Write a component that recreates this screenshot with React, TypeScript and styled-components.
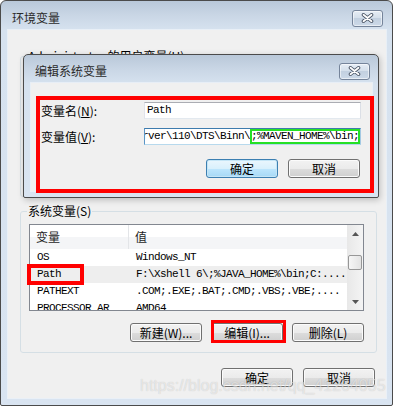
import React from 'react';
import styled, { createGlobalStyle, css } from 'styled-components';

const CJK = `"Noto Sans CJK SC", "Liberation Sans", sans-serif`;
const MONO = `"Liberation Mono", "DejaVu Sans Mono", monospace`;

const GlobalStyle = createGlobalStyle`
    html, body {
        margin: 0;
        padding: 0;
        background: #ffffff;
    }
    body {
        font-family: ${CJK};
        font-size: 12px;
        color: #000;
    }
`;

const frame = css`
    box-sizing: border-box;
    border: 1px solid #4b4b4b;
    background: linear-gradient(180deg, #b9c8d9 0, #c9d6e5 14px, #d6e2ef 29px, #d9e4f1 100%);
    display: flex;
    flex-direction: column;
`;

const SWindow = styled.div`
    ${frame};
    position: relative;
    width: 393px;
    height: 406px;
    border-radius: 6px 6px 2px 2px;
    padding: 0 6px 7px 7px;
    overflow: hidden;
`;

const STitleBar = styled.div<{ $height: number; $top: number; $right: number }>`
    height: ${({ $height }) => $height}px;
    box-sizing: border-box;
    padding: ${({ $top, $right }) => `${$top}px ${$right}px 0 4px`};
    display: flex;
    align-items: center;
    justify-content: space-between;
`;

const STitle = styled.span`
    font: 12px/14px ${CJK};
    color: #2a2a2a;
`;

const SCloseButton = styled.div`
    width: 31px;
    height: 17px;
    box-sizing: border-box;
    border: 1px solid #75849a;
    border-radius: 3px;
    background: linear-gradient(180deg, #e6edf5 0%, #d3deea 50%, #c2d0e0 50%, #ccd9e8 100%);
    box-shadow: inset 0 0 0 1px rgba(255, 255, 255, 0.55);
    display: grid;
    place-items: center;
`;

const SBody = styled.div`
    flex: 1;
    background: #f0f0f0;
    padding: 19px 9px 11px 12px;
    display: flex;
    flex-direction: column;
    box-shadow: 0 0 0 1px rgba(255, 255, 255, 0.45);
`;

const SGroup = styled.fieldset<{ $height?: number }>`
    margin: 0;
    min-width: 0;
    border: 1px solid #d5dfe5;
    border-radius: 3px;
    padding: 6px 12px 10px 8px;
    ${({ $height }) =>
        $height &&
        css`
            height: ${$height}px;
            box-sizing: border-box;
        `}
    & + & {
        margin-top: 7px;
    }
`;

const SLegend = styled.legend`
    padding: 0 1px;
    margin-left: -2px;
    font: 12px/14px ${CJK};
    color: #000;
`;

const SListWrap = styled.div`
    position: relative;
    height: 87px;
`;

const SList = styled.div`
    height: 100%;
    box-sizing: border-box;
    border: 1px solid #828790;
    background: #fff;
    display: flex;
    overflow: hidden;
`;

const STable = styled.div`
    flex: 1;
    min-width: 0;
    display: flex;
    flex-direction: column;
`;

const SHeaderRow = styled.div`
    display: grid;
    grid-template-columns: 99px 1fr;
    height: 24px;
    flex-shrink: 0;
    background: linear-gradient(180deg, #ffffff 0 48%, #f4f5f7 48% 100%);
`;

const SHeaderCell = styled.div`
    display: flex;
    align-items: center;
    padding-left: 6px;
    font: 12px/14px ${CJK};
    color: #1f1f1f;
    &:first-child {
        border-right: 1px solid #e3e5e8;
    }
`;

const SRow = styled.div<{ $selected?: boolean }>`
    display: grid;
    grid-template-columns: 99px 1fr;
    height: 17px;
    flex-shrink: 0;
    align-items: center;
    background: ${({ $selected }) => ($selected ? '#eeeeee' : '#ffffff')};
    font: 11px/17px ${MONO};
    letter-spacing: -0.6px;
    color: #000;
    white-space: nowrap;
`;

const SCell = styled.div`
    padding-left: 7px;
    overflow: hidden;
`;

const SScrollbar = styled.div`
    width: 16px;
    flex-shrink: 0;
    display: flex;
    flex-direction: column;
    background: linear-gradient(90deg, #e8e8e8, #f4f4f4);
`;

const SArrowBox = styled.div`
    height: 17px;
    display: grid;
    place-items: center;
`;

const STrack = styled.div`
    flex: 1;
`;

const SThumb = styled.div`
    margin: 13px 1px 0;
    height: 15px;
    box-sizing: border-box;
    border: 1px solid #979797;
    border-radius: 2px;
    background: linear-gradient(90deg, #f6f6f6, #e3e3e3);
`;

const SButtonRow = styled.div<{ $gap: number; $top: number; $right?: number }>`
    display: flex;
    justify-content: flex-end;
    gap: ${({ $gap }) => $gap}px;
    margin-top: ${({ $top }) => $top}px;
    padding-right: ${({ $right = 0 }) => $right}px;
`;

const SButton = styled.button<{ $default?: boolean }>`
    width: 72px;
    height: 19px;
    box-sizing: border-box;
    padding: 0;
    border: 1px solid #707070;
    border-radius: 3px;
    background: linear-gradient(180deg, #f2f2f2 0%, #ebebeb 50%, #dddddd 50%, #cfcfcf 100%);
    box-shadow: inset 0 0 0 1px #fbfbfb;
    font: 12px/1 ${CJK};
    color: #000;
    display: flex;
    align-items: center;
    justify-content: center;
    ${({ $default }) =>
        $default &&
        css`
            border-color: #3c7fb1;
            background: linear-gradient(180deg, #eaf6fd 0%, #d9f0fc 50%, #bee6fd 50%, #a7d9f5 100%);
            box-shadow: inset 0 0 0 1px #c4e5f6;
        `}
`;

const SMarkedSlot = styled.span`
    position: relative;
    display: inline-flex;
`;

// red annotation frames drawn over the screenshot
const SMark = styled.div<{ $left: number; $top: number; $width: number; $height: number; $thick: number }>`
    position: absolute;
    left: ${({ $left }) => $left}px;
    top: ${({ $top }) => $top}px;
    width: ${({ $width }) => $width}px;
    height: ${({ $height }) => $height}px;
    box-sizing: border-box;
    border: ${({ $thick }) => $thick}px solid #ff0000;
    pointer-events: none;
    z-index: 2;
`;

const SDialog = styled.div`
    ${frame};
    position: absolute;
    left: 22px;
    top: 53px;
    width: 356px;
    height: 144px;
    border-radius: 5px 5px 2px 2px;
    padding: 0 6px 6px 7px;
    box-shadow: 1px 2px 6px rgba(0, 0, 0, 0.22);
    z-index: 1;
`;

const SDialogBody = styled.div`
    flex: 1;
    position: relative;
    background: #f0f0f0;
    padding: 19px 11px 0 10px;
    box-shadow: 0 0 0 1px rgba(255, 255, 255, 0.45);
`;

const SForm = styled.div`
    display: grid;
    grid-template-columns: 103px 1fr;
    grid-auto-rows: 17px;
    row-gap: 9px;
    align-items: center;
`;

const SLabel = styled.span`
    font: 12px/14px ${CJK};
    color: #000;
`;

const SField = styled.div<{ $focused?: boolean }>`
    height: 17px;
    box-sizing: border-box;
    border: 1px solid;
    border-color: #abadb3 #dbdfe6 #e3e9ef #e2e3ea;
    background: #fff;
    padding-left: 2px;
    font: 11px/15px ${MONO};
    letter-spacing: -0.6px;
    color: #000;
    white-space: nowrap;
    overflow: hidden;
    ${({ $focused }) =>
        $focused &&
        css`
            border-color: #3d7bad #a4c9e3 #b7d9ed #5b95c6;
            padding-left: 0;
        `}
`;

const SScrolledText = styled.span`
    margin-left: -3px;
`;

const SGreenMark = styled.span`
    display: inline-block;
    vertical-align: top;
    height: 15px;
    padding: 0 1px;
    box-shadow: inset 0 0 0 2px #25e025;
`;

const SWatermark = styled.div`
    position: absolute;
    left: 139px;
    top: 376px;
    font: 16px/18px "Liberation Sans", Arial, sans-serif;
    color: rgba(255, 255, 255, 0.55);
    text-shadow: 0 0 1px rgba(0, 0, 0, 0.2);
    white-space: nowrap;
    pointer-events: none;
    z-index: 3;
`;

const CloseGlyph = () => (
    <svg width="13" height="10" viewBox="0 0 13 10">
        <path d="M2.5 1.8 L10.5 8.2 M10.5 1.8 L2.5 8.2" stroke="#4a5566" strokeWidth="3.6" strokeLinecap="round" />
        <path d="M2.5 1.8 L10.5 8.2 M10.5 1.8 L2.5 8.2" stroke="#ffffff" strokeWidth="1.8" strokeLinecap="round" />
    </svg>
);

const Arrow = ({ up }: { up?: boolean }) => (
    <svg width="7" height="4" viewBox="0 0 7 4">
        <path d={up ? 'M0 4 L3.5 0 L7 4 Z' : 'M0 0 L7 0 L3.5 4 Z'} fill="#555" />
    </svg>
);

type EnvRow = {
    name: string;
    value: string;
    selected?: boolean;
};

const systemRows: EnvRow[] = [
    { name: 'OS', value: 'Windows_NT' },
    { name: 'Path', value: 'F:\\Xshell 6\\;%JAVA_HOME%\\bin;C:....', selected: true },
    { name: 'PATHEXT', value: '.COM;.EXE;.BAT;.CMD;.VBS;.VBE;....' },
    { name: 'PROCESSOR_AR', value: 'AMD64' },
];

export default function App() {
    return (
        <>
            <GlobalStyle />
            <SWindow>
                <STitleBar $height={29} $top={5} $right={3}>
                    <STitle>环境变量</STitle>
                    <SCloseButton>
                        <CloseGlyph />
                    </SCloseButton>
                </STitleBar>
                <SBody>
                    <SGroup $height={148}>
                        <SLegend>Administrator 的用户变量(U)</SLegend>
                    </SGroup>
                    <SGroup>
                        <SLegend>系统变量(S)</SLegend>
                        <SListWrap>
                            <SList>
                                <STable>
                                    <SHeaderRow>
                                        <SHeaderCell>变量</SHeaderCell>
                                        <SHeaderCell>值</SHeaderCell>
                                    </SHeaderRow>
                                    {systemRows.map((row) => (
                                        <SRow key={row.name} $selected={row.selected}>
                                            <SCell>{row.name}</SCell>
                                            <SCell>{row.value}</SCell>
                                        </SRow>
                                    ))}
                                </STable>
                                <SScrollbar>
                                    <SArrowBox>
                                        <Arrow up />
                                    </SArrowBox>
                                    <STrack>
                                        <SThumb />
                                    </STrack>
                                    <SArrowBox>
                                        <Arrow />
                                    </SArrowBox>
                                </SScrollbar>
                            </SList>
                            <SMark $left={-2} $top={40} $width={57} $height={21} $thick={4} />
                        </SListWrap>
                        <SButtonRow $gap={9} $top={12}>
                            <SButton>新建(W)...</SButton>
                            <SMarkedSlot>
                                <SButton>编辑(I)...</SButton>
                                <SMark $left={0} $top={-3} $width={75} $height={23} $thick={3} />
                            </SMarkedSlot>
                            <SButton>删除(L)</SButton>
                        </SButtonRow>
                    </SGroup>
                    <SButtonRow $gap={10} $top={15} $right={2}>
                        <SButton>确定</SButton>
                        <SButton>取消</SButton>
                    </SButtonRow>
                </SBody>

                <SDialog>
                    <STitleBar $height={28} $top={4} $right={2}>
                        <STitle>编辑系统变量</STitle>
                        <SCloseButton>
                            <CloseGlyph />
                        </SCloseButton>
                    </STitleBar>
                    <SDialogBody>
                        <SForm>
                            <SLabel>
                                变量名(<u>N</u>):
                            </SLabel>
                            <SField>Path</SField>
                            <SLabel>
                                变量值(<u>V</u>):
                            </SLabel>
                            <SField $focused>
                                <SScrolledText>rver\110\DTS\Binn\</SScrolledText>
                                <SGreenMark>;%MAVEN_HOME%\bin;</SGreenMark>
                            </SField>
                        </SForm>
                        <SButtonRow $gap={10} $top={14} $right={1}>
                            <SButton $default>确定</SButton>
                            <SButton>取消</SButton>
                        </SButtonRow>
                        <SMark $left={5} $top={13} $width={338} $height={97} $thick={4} />
                    </SDialogBody>
                </SDialog>

                <SWatermark>https://blog.csdn.net/qq_41264055</SWatermark>
            </SWindow>
        </>
    );
}
